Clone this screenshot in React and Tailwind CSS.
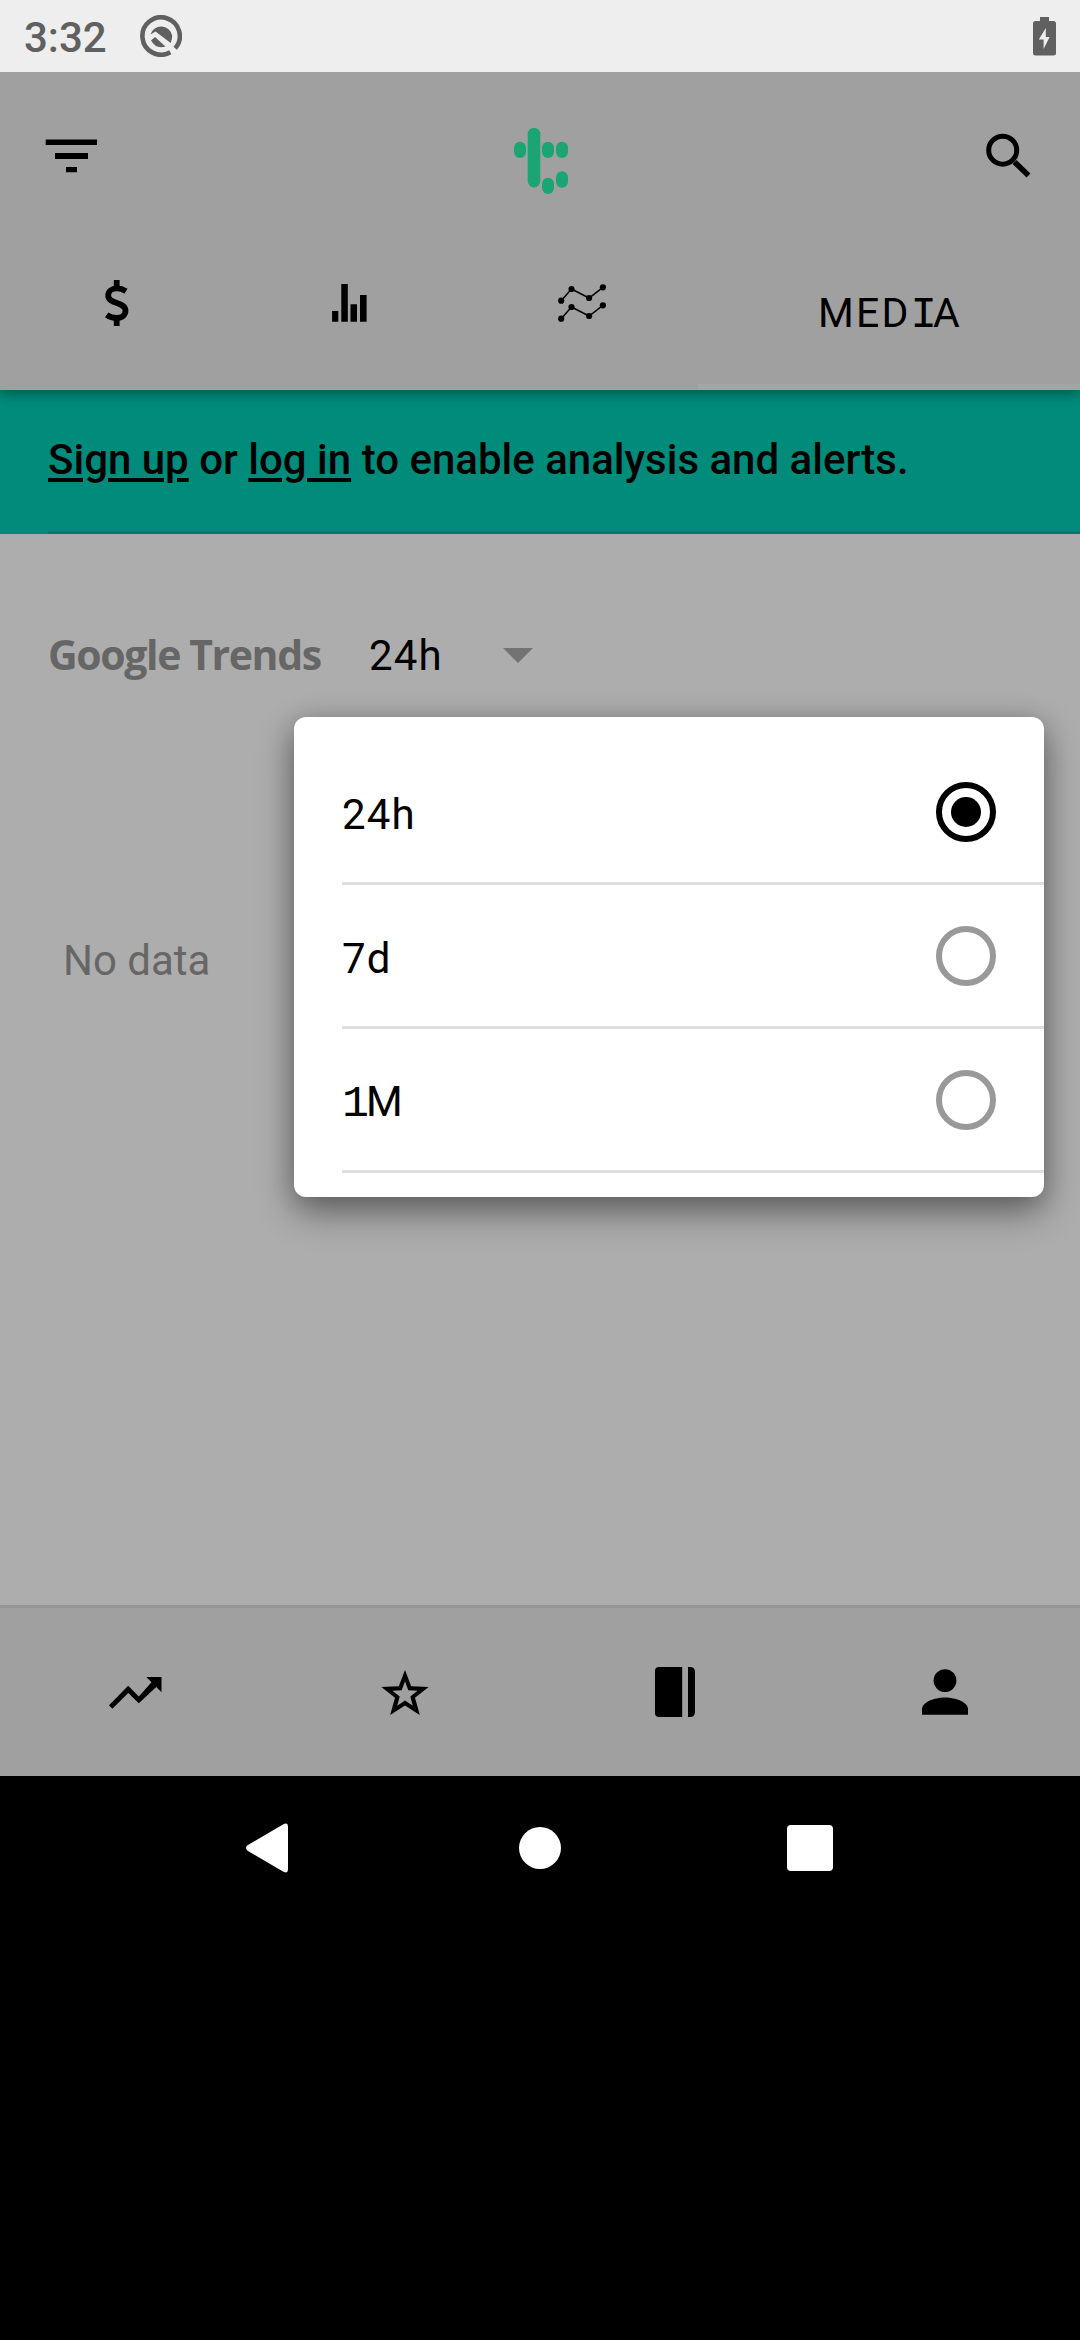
const options = [
  { label: '24h', selected: true },
  { label: '7d', selected: false },
  { label: '1M', selected: false },
];

function StatusBar() {
  return (
    <div className="relative z-20 h-[72px] shrink-0 bg-[#eeeeee] flex items-center justify-between pl-6 pr-6 text-[#606060]">
      <div className="flex items-center">
        <span className="w-[116px] text-[42px] leading-[72px] font-medium pt-[3px]">3:32</span>
        <svg width="42" height="42" viewBox="140 14.5 42 42">
          <path d="M170.300 51.800A18.700 18.700 0 1 1 175.200 47.800" fill="none" stroke="currentColor" strokeWidth="4.600" />
          <path d="M150.500 34a11.200 11.200 0 0 1 21.700 1q0 4-1.500 7.500L155.500 31Z" fill="currentColor" />
          <path d="M151 40l4-3.500 10.500 9.500q-9.500 3-14.500-6Z" fill="currentColor" />
        </svg>
      </div>
      <svg width="23" height="39" viewBox="1033 16 23 39">
        <path d="M1040 16h9v4h4.500q2.500 0 2.500 2.500v29.500q0 2.500-2.500 2.500h-18q-2.500 0-2.500-2.500v-29.500q0-2.500 2.500-2.500h4.500Z" fill="currentColor" />
        <path d="M1045.800 27v9h3.800l-6 12v-9.500h-4.800Z" fill="#eee" />
      </svg>
    </div>
  );
}

function Header() {
  return (
    <header className="relative z-10 h-[318px] shrink-0 bg-[#a0a0a0] flex flex-col shadow-[0_3px_12px_rgba(0,0,0,0.4)]">
      <div className="h-[168px] flex items-center justify-between pl-[45px] pr-[48px]">
        <svg width="53" height="36" viewBox="45 138 53 36">
          <path d="M45.700 139.500h51.300v5.500h-51.300ZM55 153h33v6h-33ZM66 167h11v5.200h-11Z" />
        </svg>
        <svg className="mt-[10px] mr-[3px]" width="54" height="68" viewBox="513 127 54 68" fill="#1ba572">
          <rect x="513" y="141.700" width="12" height="16.200" rx="6" />
          <rect x="526.700" y="127.700" width="12.600" height="59.700" rx="6.300" />
          <rect x="541" y="141.700" width="12" height="16.200" rx="6" />
          <rect x="555" y="141.700" width="12" height="16.200" rx="6" />
          <rect x="541" y="177.700" width="12" height="16.300" rx="6" />
          <rect x="555" y="171.200" width="12" height="16.500" rx="6" />
        </svg>
        <svg width="46" height="46" viewBox="986 133 46 46" fill="none" stroke="black">
          <circle cx="1002.700" cy="150.200" r="14" strokeWidth="5" />
          <path d="M1014.500 162l14 13.500" strokeWidth="5.600" />
        </svg>
      </div>
      <nav className="h-[150px] flex">
        <div className="w-[233px] pt-[40px] flex justify-center">
          <svg width="26" height="46" viewBox="103.500 280 26 46" fill="none" stroke="black">
            <path d="M116.200 280v7M116.200 318.500v7.500" strokeWidth="5.800" />
            <path d="M125.500 291.300q-4.500-2.900-9-2.900c-5.500 0-8.800 3-8.800 7c0 9.200 17.300 5.800 17.300 15.200c0 4-3 7.400-8.800 7.400q-5.500 0-10-3.200" strokeWidth="5.800" />
          </svg>
        </div>
        <div className="w-[232px] pt-[44px] flex justify-center">
          <svg width="35" height="38" viewBox="332 284 35 38">
            <path d="M332.100 311h6.200v10.800h-6.200ZM341.300 284h6.500v37.800h-6.500ZM350.500 304.300h6.500v17.500h-6.500ZM360 295h6.600v26.800h-6.600Z" />
          </svg>
        </div>
        <div className="w-[233px] pt-[43px] flex justify-center">
          <svg width="50" height="40" viewBox="556 283 50 40">
            {[0, 18].map((dy) => (
              <g key={dy} transform={`translate(0 ${dy})`}>
                <path d="M560.200 300.700l10.300-11.700l17.600 9l13.800-10.700" fill="none" stroke="black" strokeWidth="1.500" />
                <circle cx="560.200" cy="300.700" r="3.100" />
                <circle cx="570.500" cy="289" r="3.100" />
                <circle cx="588.100" cy="298" r="3.100" />
                <circle cx="601.900" cy="287.300" r="3.100" />
              </g>
            ))}
          </svg>
        </div>
        <div className="w-[382px] border-b-[6px] border-[#a5a5a7] pt-[48px] pl-[120px] text-[41px] leading-[50px] tracking-[2.2px]">
          MED<span className="font-['Liberation_Mono'] text-[44px] leading-none tracking-[-4px]">I</span>A
        </div>
      </nav>
    </header>
  );
}

function Menu() {
  return (
    <div className="absolute z-20 left-[294px] top-[717px] w-[750px] h-[480px] rounded-[12px] bg-white pt-6 shadow-[0_15px_36px_rgba(0,0,0,0.42),0_2px_24px_rgba(0,0,0,0.14)]">
      {options.map(({ label, selected }) => (
        <div key={label} className="ml-12 h-[144px] border-b-[3px] border-[#dedede] flex items-center justify-between pr-12">
          <span className="text-[42px] leading-[48px] pt-[6px] tracking-[1.2px]">
            {label === '1M' ? (
              <>
                <span className="font-['Liberation_Mono'] text-[45px] leading-none tracking-[-3px]">1</span>M
              </>
            ) : (
              label
            )}
          </span>
          {selected ? (
            <span className="size-[60px] rounded-full border-6 border-black flex items-center justify-center">
              <span className="size-[30px] rounded-full bg-black" />
            </span>
          ) : (
            <span className="size-[60px] rounded-full border-6 border-[#999999]" />
          )}
        </div>
      ))}
    </div>
  );
}

function BottomTabs() {
  return (
    <nav className="h-[171px] shrink-0 border-t-[3px] border-[#959595] bg-[#a0a0a0] grid grid-cols-4 items-center justify-items-center">
      <svg width="56" height="52" viewBox="107 1666 56 52">
        <path d="M146.300 1677h15.200v15.300l-5.200-5.200l-17.500 16.200l-10.600-10.300l-15.800 15.700l-3.400-3.500l19.200-19.500l10.600 10.700l12.700-14.200Z" />
      </svg>
      <svg width="50" height="52" viewBox="380 1666 50 52">
        <path
          fillRule="evenodd"
          d="M405 1670l6.200 16.200l17.400.8l-13.600 10.700l4.800 17.300l-14.800-9.600l-14.800 9.600l4.800-17.300l-13.600-10.700l17.400-.8ZM405 1681.300l-3.300 8.900l-9.300.5l7.300 5.900l-2.500 9.200l7.800-5.200l7.800 5.200l-2.500-9.200l7.300-5.900l-9.300-.5Z"
        />
      </svg>
      <svg width="40" height="50" viewBox="655 1667 40 50">
        <path d="M682.200 1667v50h-23.200q-4 0-4-4v-42q0-4 4-4ZM688 1667h2q5 0 5 5v40q0 5-5 5h-2Z" />
      </svg>
      <svg width="46" height="52" viewBox="922 1666 46 52">
        <circle cx="945" cy="1680.600" r="11.400" />
        <path d="M922 1714.700v-5.700c0-6.500 12-11.500 23-11.500s23 5 23 11.500v5.700Z" />
      </svg>
    </nav>
  );
}

function SystemNav() {
  return (
    <div className="h-[564px] shrink-0 bg-black flex items-start justify-between pt-[47px] pl-[246px] pr-[247px]">
      <svg width="42" height="50" viewBox="0 0 42 50" fill="white">
        <path d="M1.500 22.300L37 1.400Q42-1 42 4v42Q42 51 37 48.600L1.500 27.700Q-1.500 25 1.500 22.300Z" />
      </svg>
      <span className="size-[42px] mt-1 ml-[5px] rounded-full bg-white" />
      <span className="size-[46px] mt-[2px] rounded-[4px] bg-white" />
    </div>
  );
}

export default function App() {
  return (
    <div className="relative w-[1080px] h-[2340px] overflow-hidden flex flex-col bg-[#adadad] text-black font-['Roboto',sans-serif]">
      <StatusBar />
      <Header />
      <div className="h-[144px] shrink-0 bg-[#008b7a] flex flex-col pl-12">
        <p className="h-[141px] pt-[45px] text-[42px] leading-[50px] font-medium whitespace-nowrap">
          <span className="underline decoration-[4px] underline-offset-[4px]">Sign up</span> or{' '}
          <span className="underline decoration-[4px] underline-offset-[4px]">log in</span> to enable analysis and alerts.
        </p>
        <div className="h-[3px] bg-[#007b6b]" />
      </div>
      <main className="flex-1 flex flex-col">
        <div className="pt-[96px] pl-12 flex items-center h-[146px]">
          <span className="w-[321px] text-[41px] leading-[50px] pb-[2px] font-bold text-[#666666] font-['Open_Sans'] tracking-[-1.4px] whitespace-nowrap">Google Trends</span>
          <span className="w-[134px] text-[42px] leading-[50px] pt-[2px] tracking-[1.2px]">24h</span>
          <svg width="30" height="15" viewBox="0 0 30 15" fill="#737373">
            <path d="M0 0h30L15 15Z" />
          </svg>
        </div>
        <div className="pt-[256px] pl-[63px] text-[42px] leading-[50px] text-[#666666]">No data</div>
      </main>
      <BottomTabs />
      <SystemNav />
      <Menu />
    </div>
  );
}
